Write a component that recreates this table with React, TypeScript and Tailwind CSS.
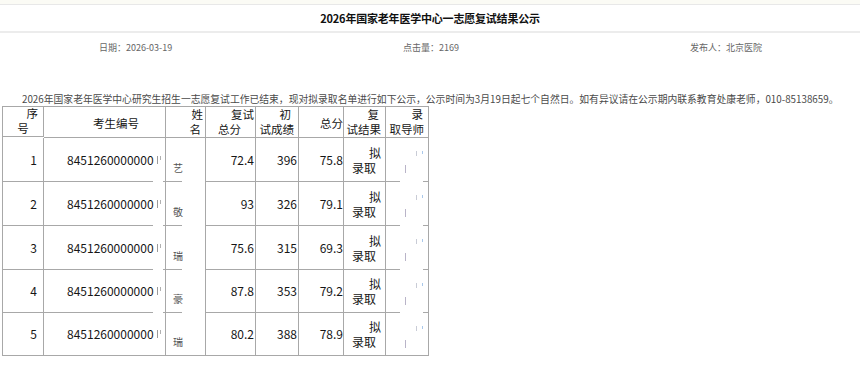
import React from "react";

type Row = {
  no: string;
  id: string;
  name: string;
  retest: string;
  first: string;
  total: string;
};

const rows: Row[] = [
  { no: "1", id: "8451260000000", name: "艺", retest: "72.4", first: "396", total: "75.8" },
  { no: "2", id: "8451260000000", name: "敬", retest: "93", first: "326", total: "79.1" },
  { no: "3", id: "8451260000000", name: "瑞", retest: "75.6", first: "315", total: "69.3" },
  { no: "4", id: "8451260000000", name: "豪", retest: "87.8", first: "353", total: "79.2" },
  { no: "5", id: "8451260000000", name: "瑞", retest: "80.2", first: "388", total: "78.9" },
];

const rowHeights = ["h-[44px]", "h-[44px]", "h-[44px]", "h-[43px]", "h-[43px]"];

const cell = "relative border-r border-b border-[#a8a8a8]";

// two-line header label; each line gets its own right inset
function Head({ a, b, ra, rb }: { a: string; b: string; ra: string; rb: string }) {
  return (
    <div className={`${cell} flex flex-col justify-end leading-[15px]`}>
      <div className={`text-right ${ra}`}>{a}</div>
      <div className={`text-right ${rb}`}>{b}</div>
    </div>
  );
}

// a small white patch lying over a row border
function Gap({ left, width }: { left: string; width: string }) {
  return <div className={`absolute bottom-[-1px] h-[1px] bg-white ${left} ${width}`} />;
}

export default function App() {
  return (
    <div
      className="w-[860px] h-[365px] overflow-hidden bg-white text-[#333]"
      style={{ fontFamily: '"Noto Sans CJK SC", "Noto Sans", sans-serif' }}
    >
      {/* header bar */}
      <div className="h-[5px] bg-[#fbfbf5] border-b border-[#e8e8e8]" />
      <div className="h-[28px] flex items-center justify-center border-b-2 border-[#ececec]">
        <h1 className="text-[11px] font-bold text-[#111] tracking-[-0.2px]">
          2026年国家老年医学中心一志愿复试结果公示
        </h1>
      </div>
      <div className="h-[30px] flex items-center justify-between pl-[99px] pr-[98px] text-[9px] text-[#666]">
        <span>日期：2026-03-19</span>
        <span>点击量：2169</span>
        <span>发布人：北京医院</span>
      </div>

      {/* body */}
      <div className="pl-[2px] pt-[28px]">
        <p className="indent-[20px] whitespace-nowrap text-[9.8px] leading-[16px] text-[#4a4a4a]">
          2026年国家老年医学中心研究生招生一志愿复试工作已结束，现对拟录取名单进行如下公示，公示时间为3月19日起七个自然日。如有异议请在公示期内联系教育处康老师，010-85138659。
        </p>

        <div className="mt-[-1px] w-[427px] grid grid-cols-[41px_122px_40px_50px_43px_45px_42px_43px] border-l border-t border-[#a8a8a8] text-[12px] text-[#161616]">
          {/* header row */}
          <div className={`${cell} h-[30px] flex flex-col justify-end leading-[15px] text-[11.5px]`}>
            <div className="text-right pr-[5px]">序</div>
            <div className="text-center">号</div>
          </div>
          <div className={`${cell} flex items-center pl-[49px] pt-[3px] text-[11.5px]`}>考生编号</div>
          <div className="contents text-[11.5px]">
            <Head a="姓" b="名" ra="pr-[2px]" rb="pr-[4px]" />
            <Head a="复试" b="总分" ra="pr-[1px]" rb="pr-[14px]" />
            <Head a="初" b="试成绩" ra="pr-[7px]" rb="pr-[4px]" />
            <div className={`${cell} flex items-center justify-end pt-[3px]`}>总分</div>
            <Head a="复" b="试结果" ra="pr-[6px]" rb="pr-[4px]" />
            <Head a="录" b="取导师" ra="pr-[5px]" rb="pr-[4px]" />
          </div>

          {rows.map((r, i) => {
            const h = rowHeights[i];
            const last = i === rows.length - 1;
            return (
              <React.Fragment key={r.no}>
                <div className={`${cell} ${h} flex items-center justify-end pr-[6px]`}>{r.no}</div>
                <div className={`${cell} flex items-center pl-[23px]`}>
                  <span>{r.id}</span>
                  {/* masked remainder of the number */}
                  <span className="ml-[3px] w-[1px] h-[8px] bg-[#9a9a9a]" />
                  <span className="ml-[2px] mb-[4px] w-[1px] h-[4px] bg-[#b0b0b0]" />
                  {!last && <Gap left="left-[109px]" width="w-[10px]" />}
                </div>
                <div className={`${cell} flex items-end pl-[7px] pb-[6px] text-[10px] text-[#555]`}>
                  {r.name}
                  {!last && <Gap left="left-[16px]" width="w-[23px]" />}
                </div>
                <div className={`${cell} flex items-center justify-end pr-[1px]`}>{r.retest}</div>
                <div className={`${cell} flex items-center justify-end pr-[1px]`}>{r.first}</div>
                <div className={`${cell} flex items-center justify-end`}>{r.total}</div>
                <div className={`${cell} flex flex-col justify-center leading-[15px]`}>
                  <div className="text-right pr-[4px]">拟</div>
                  <div className="text-right pr-[9px]">录取</div>
                </div>
                <div className={cell}>
                  {/* masked tutor name, only specks left */}
                  <div className="absolute left-[19px] top-[27px] w-[1px] h-[8px] bg-[#b9b4c8]" />
                  <div className="absolute left-[30px] top-[13px] w-[1px] h-[5px] bg-[#c9ccd6]" />
                  <div className="absolute left-[36px] top-[13px] w-[1px] h-[3px] bg-[#a9c8ea]" />
                  {!last && <Gap left="left-[14px]" width="w-[23px]" />}
                </div>
              </React.Fragment>
            );
          })}
        </div>
      </div>
    </div>
  );
}
